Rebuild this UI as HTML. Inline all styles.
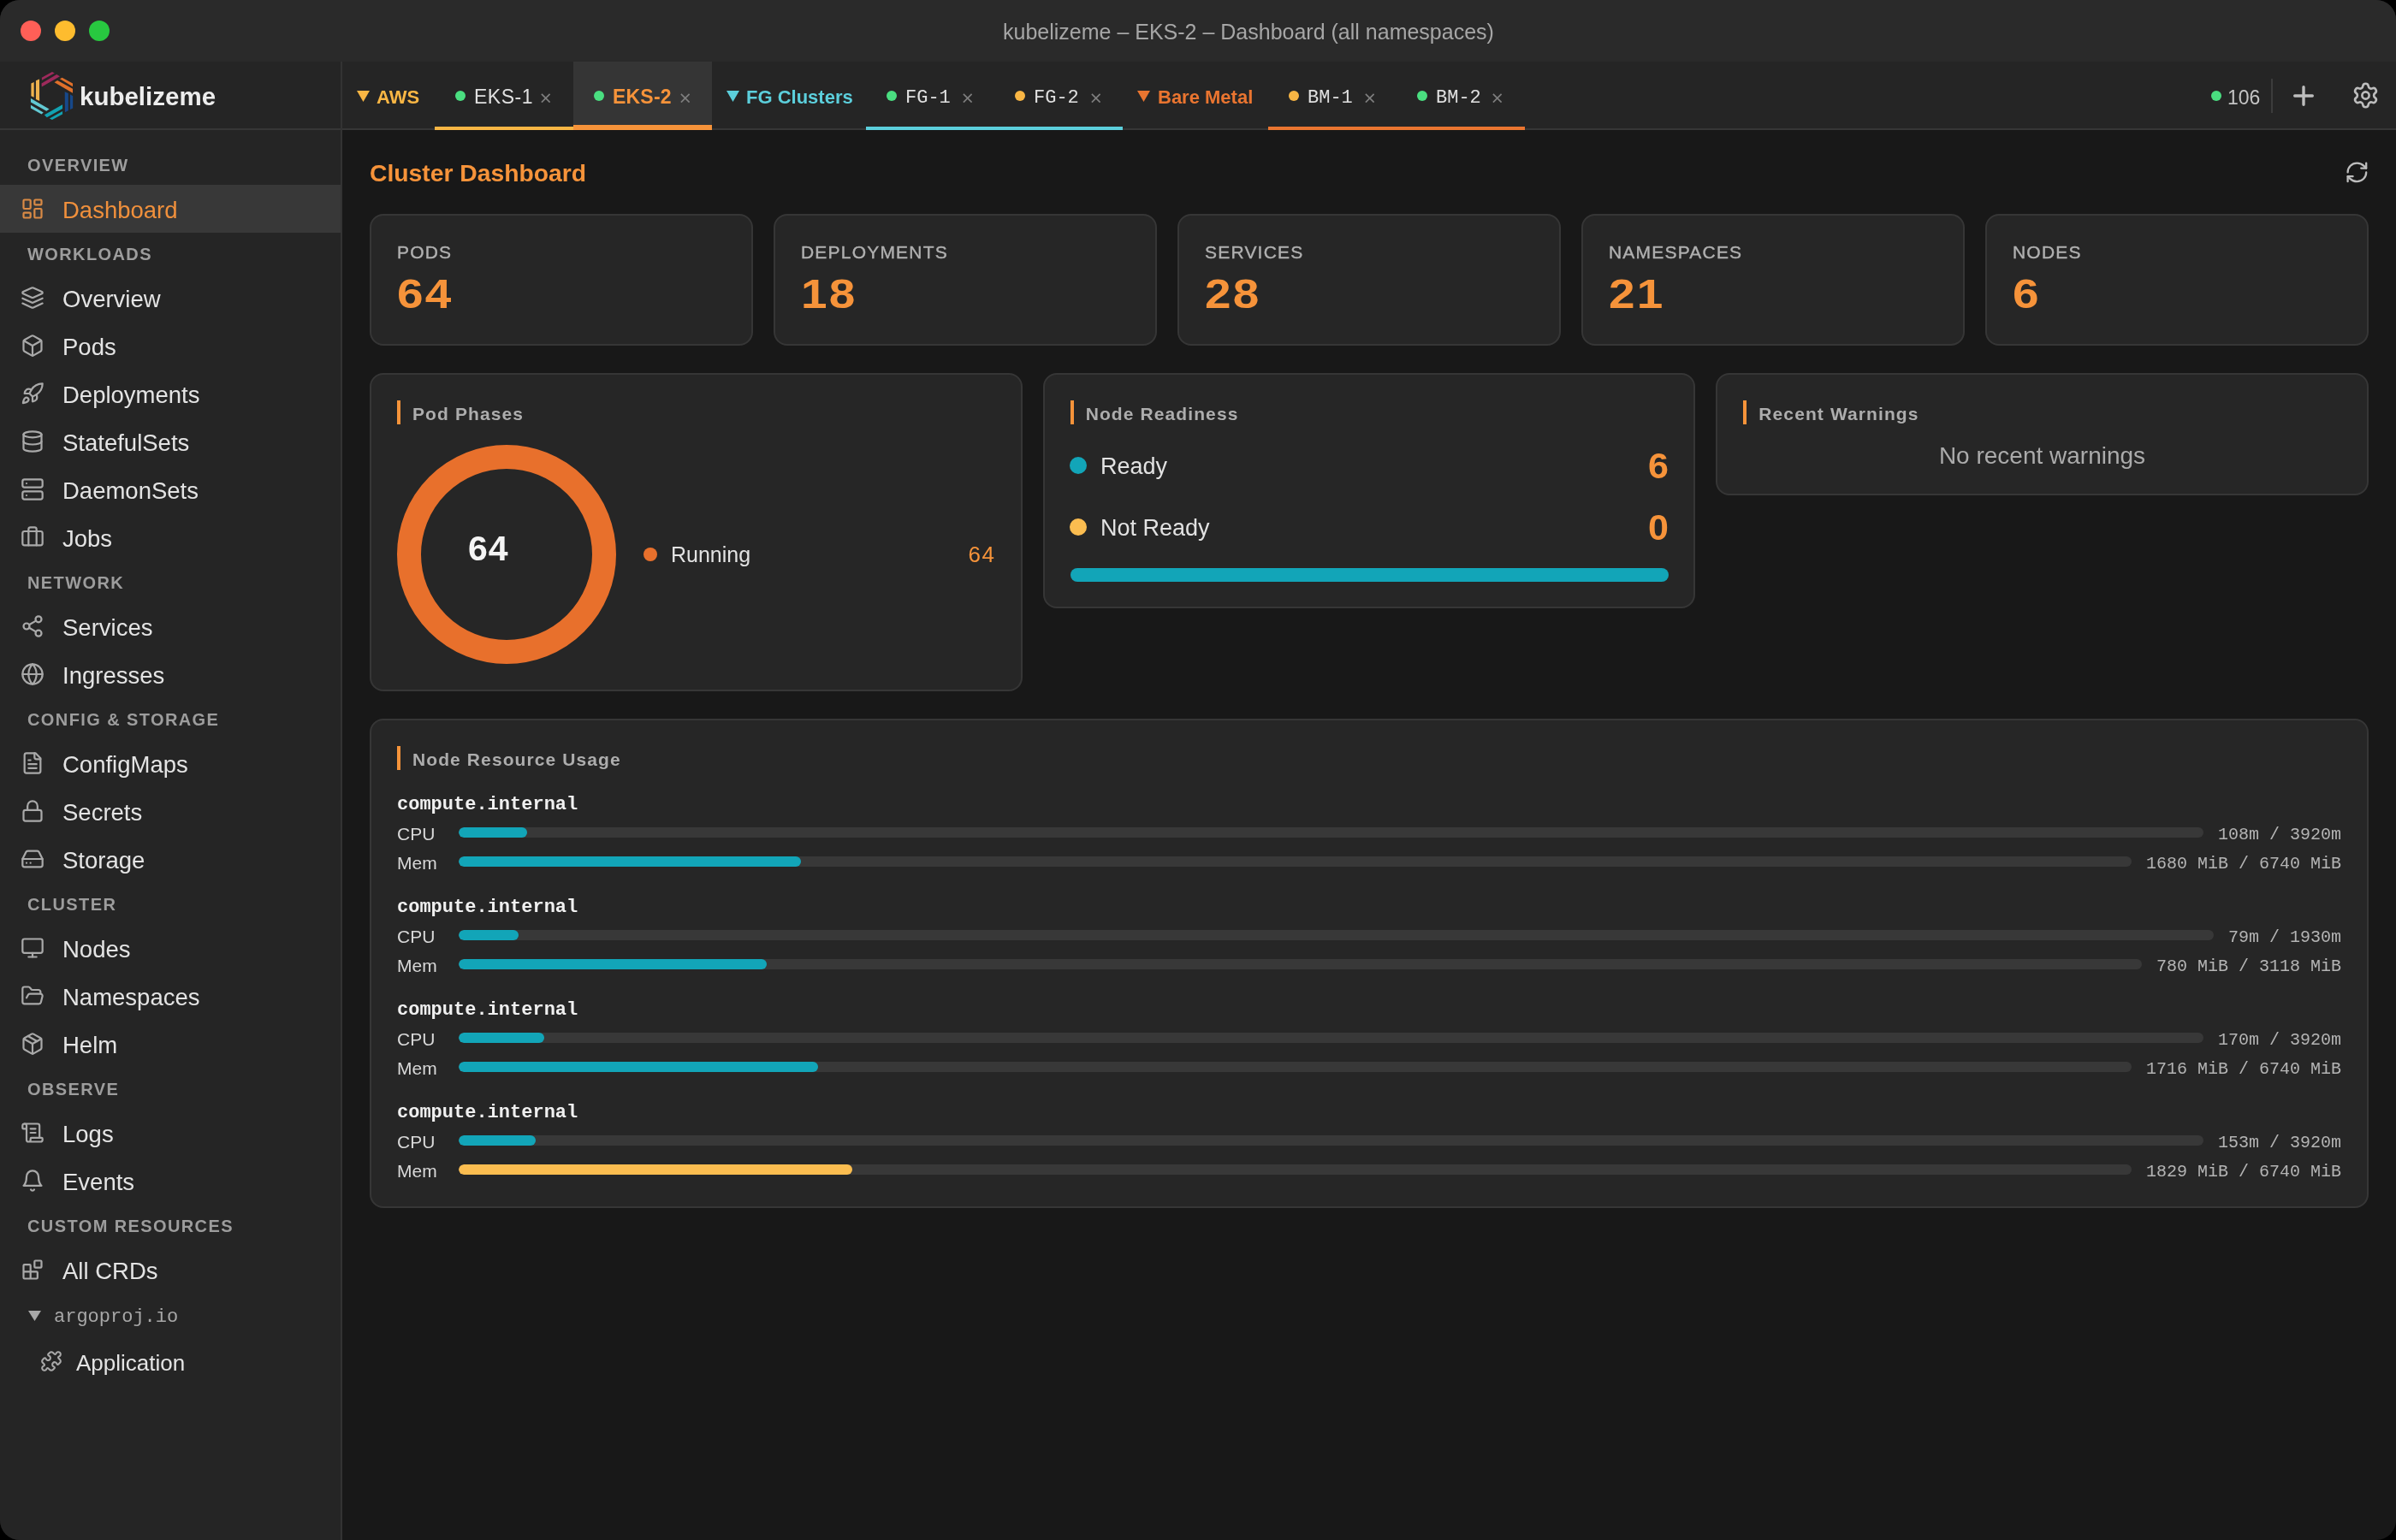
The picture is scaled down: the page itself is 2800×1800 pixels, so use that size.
<!DOCTYPE html>
<html><head><meta charset="utf-8">
<style>
*{box-sizing:border-box;margin:0;padding:0}
html,body{width:2800px;height:1800px;background:#000;overflow:hidden}
body{font-family:"Liberation Sans",sans-serif;color:#e6e6e6}
.win{position:absolute;left:0;top:0;width:2800px;height:1800px;border-radius:23px;overflow:hidden;background:#181818}
.abs{position:absolute}
.lyr{position:absolute;left:0;top:0;width:2800px;height:1800px;will-change:transform}
.titlebar{left:0;top:0;width:2800px;height:72px;background:#2a2a2a}
.tl{position:absolute;top:24px;width:24px;height:24px;border-radius:50%}
.title{position:absolute;left:1172px;top:17px;height:40px;line-height:40px;font-size:25px;color:#a6a6a6;white-space:nowrap}
.header{left:0;top:72px;width:2800px;height:80px;background:#252525;border-bottom:2px solid #363636}
.sidebar{left:0;top:152px;width:400px;height:1648px;background:#252525;border-right:2px solid #333}
.vsep{left:398px;top:72px;width:2px;height:80px;background:#333}
.sl{position:absolute;left:32px;height:48px;line-height:50px;font-size:20px;font-weight:bold;letter-spacing:1.4px;color:#9d9d9d;white-space:nowrap}
.si{position:absolute;left:0;width:398px;height:56px;line-height:56px;font-size:27.5px;color:#e4e4e4;white-space:nowrap}
.si span{position:absolute;left:73px;top:2px}
.si svg{position:absolute;left:24px;top:14px;width:28px;height:28px;fill:none;stroke:#a9a9a9;stroke-width:1.9;stroke-linecap:round;stroke-linejoin:round}
.si.act{background:#383838;color:#f0903c}
.si.act svg{stroke:#d98a45}
.main-title{position:absolute;left:432px;top:180px;height:40px;line-height:40px;font-size:28.3px;font-weight:bold;color:#f6933a;white-space:nowrap}
.card{position:absolute;background:#262626;border:2px solid #363636;border-radius:16px}
.stat .lbl{position:absolute;left:30px;top:28px;height:30px;line-height:30px;font-size:21px;letter-spacing:1.2px;color:#b0b0b0;-webkit-text-stroke:0.4px #b0b0b0;white-space:nowrap}
.stat .val{position:absolute;left:30px;top:63px;height:56px;line-height:56px;font-size:49px;font-weight:bold;letter-spacing:2px;transform:scaleX(1.12);transform-origin:0 0;color:#f6933a}
.ct{position:absolute;left:30px;top:30px;height:32px;}
.ct i{position:absolute;left:0;top:0;width:4px;height:28px;background:#f6933a}
.ct span{position:absolute;left:18px;top:0;height:28px;line-height:31px;font-size:21px;font-weight:bold;letter-spacing:1.1px;color:#adadad;white-space:nowrap}
.mono{font-family:"Liberation Mono",monospace}
.rr{left:464px;width:2272px;height:30px;display:flex;align-items:center}
.rr b{font-weight:normal;width:72px;font-size:21px;color:#d8d8d8;line-height:30px;position:relative;top:1.5px}
.trk{flex:1;height:12px;border-radius:6px;background:#383838;position:relative;overflow:hidden}
.trk div{position:absolute;left:0;top:0;height:12px;border-radius:6px}
.rr s{text-decoration:none;margin-left:17px;font-family:"Liberation Mono",monospace;font-size:20px;color:#b4b4b4;line-height:30px;white-space:nowrap;position:relative;top:2.5px}
.xx{width:13px;height:13px}
.xx:before,.xx:after{content:"";position:absolute;left:-1px;top:5.5px;width:15px;height:2px;background:#8a8a8a;transform:rotate(45deg)}
.xx:after{transform:rotate(-45deg)}
</style></head>
<body>
<div class="win"><div class="lyr">
  <div class="abs titlebar">
    <div class="tl" style="left:24px;background:#ff5f57"></div>
    <div class="tl" style="left:64px;background:#febc2e"></div>
    <div class="tl" style="left:104px;background:#28c840"></div>
    <div class="title">kubelizeme – EKS-2 – Dashboard (all namespaces)</div>
  </div>
  <div class="abs header"></div>
  <div class="abs vsep"></div>
  <div class="abs sidebar"></div>
  <svg class="abs" style="left:30px;top:78px;width:62px;height:68px" viewBox="0 0 1404 1540">
    <polygon fill="#9e2a5c" points="425,288 700,135 765,172 430,358"/>
    <polygon fill="#9e2a5c" points="420,442 820,205 905,257 425,530"/>
    <polygon fill="#e0702a" points="905,325 965,290 1245,440 1245,525"/>
    <polygon fill="#e0702a" points="760,415 840,365 1245,585 1245,695"/>
    <polygon fill="#17488a" points="1035,660 1128,700 1128,1162 1040,1205"/>
    <polygon fill="#17488a" points="1175,732 1250,775 1250,1100 1175,1130"/>
    <polygon fill="#12a2b2" points="495,1275 975,1000 975,1110 560,1340"/>
    <polygon fill="#12a2b2" points="630,1370 975,1175 975,1255 700,1405"/>
    <polygon fill="#62c9d3" points="135,840 625,1120 550,1170 135,942"/>
    <polygon fill="#62c9d3" points="135,1015 470,1210 420,1255 135,1100"/>
    <polygon fill="#eeb24e" points="145,440 220,410 220,810 145,775"/>
    <polygon fill="#eeb24e" points="270,370 362,330 365,905 270,860"/>
  </svg>
  <div class="abs" style="left:93px;top:93px;height:40px;line-height:40px;font-size:29.5px;font-weight:bold;color:#ededed;white-space:nowrap">kubelizeme</div>

  <!-- tabs -->
  <div class="abs" id="tabs" style="left:400px;top:72px;height:80px;width:1400px">
  </div>
  <!-- group labels -->
  <svg class="abs" style="left:417px;top:106px;width:15px;height:13px" viewBox="0 0 15 13"><polygon points="0,0 15,0 7.5,13" fill="#f9b644"/></svg>
  <div class="abs" style="left:440px;top:93.5px;height:40px;line-height:40px;font-size:22px;font-weight:bold;color:#f9b644">AWS</div>

  <div class="abs" style="left:508px;top:148px;width:162px;height:4px;background:#f9b644"></div>
  <div class="abs" style="left:532px;top:106px;width:12px;height:12px;border-radius:50%;background:#4ade80"></div>
  <div class="abs" style="left:554px;top:92.5px;height:40px;line-height:40px;font-size:23px;letter-spacing:0.5px;color:#e0e0e0;white-space:nowrap">EKS-1</div>
  <svg class="abs" style="left:632px;top:108.5px;width:11.5px;height:11.5px" viewBox="0 0 11.5 11.5"><path d="M0.9 0.9l9.7 9.7M10.6 0.9l-9.7 9.7" stroke="#7e7e7e" stroke-width="1.7"/></svg>

  <div class="abs" style="left:670px;top:72px;width:162px;height:80px;background:#353535"></div>
  <div class="abs" style="left:670px;top:146px;width:162px;height:6px;background:#f6933a"></div>
  <div class="abs" style="left:694px;top:106px;width:12px;height:12px;border-radius:50%;background:#4ade80"></div>
  <div class="abs" style="left:716px;top:92.5px;height:40px;line-height:40px;font-size:23px;font-weight:bold;letter-spacing:0.2px;color:#f6933a;white-space:nowrap">EKS-2</div>
  <svg class="abs" style="left:794.5px;top:108.5px;width:11.5px;height:11.5px" viewBox="0 0 11.5 11.5"><path d="M0.9 0.9l9.7 9.7M10.6 0.9l-9.7 9.7" stroke="#7e7e7e" stroke-width="1.7"/></svg>

  <svg class="abs" style="left:849px;top:106px;width:15px;height:13px" viewBox="0 0 15 13"><polygon points="0,0 15,0 7.5,13" fill="#5ccfdc"/></svg>
  <div class="abs" style="left:872px;top:93.5px;height:40px;line-height:40px;font-size:22px;font-weight:bold;color:#5ccfdc;white-space:nowrap">FG Clusters</div>

  <div class="abs" style="left:1012px;top:148px;width:300px;height:4px;background:#5ccfdc"></div>
  <div class="abs" style="left:1036px;top:106px;width:12px;height:12px;border-radius:50%;background:#4ade80"></div>
  <div class="abs mono" style="left:1058px;top:94.5px;height:40px;line-height:40px;font-size:22px;color:#e0e0e0;white-space:nowrap">FG-1</div>
  <svg class="abs" style="left:1124.5px;top:108.5px;width:11.5px;height:11.5px" viewBox="0 0 11.5 11.5"><path d="M0.9 0.9l9.7 9.7M10.6 0.9l-9.7 9.7" stroke="#7e7e7e" stroke-width="1.7"/></svg>
  <div class="abs" style="left:1186px;top:106px;width:12px;height:12px;border-radius:50%;background:#f9b644"></div>
  <div class="abs mono" style="left:1208px;top:94.5px;height:40px;line-height:40px;font-size:22px;color:#e0e0e0;white-space:nowrap">FG-2</div>
  <svg class="abs" style="left:1274.5px;top:108.5px;width:11.5px;height:11.5px" viewBox="0 0 11.5 11.5"><path d="M0.9 0.9l9.7 9.7M10.6 0.9l-9.7 9.7" stroke="#7e7e7e" stroke-width="1.7"/></svg>

  <svg class="abs" style="left:1329px;top:106px;width:15px;height:13px" viewBox="0 0 15 13"><polygon points="0,0 15,0 7.5,13" fill="#ea7530"/></svg>
  <div class="abs" style="left:1353px;top:93.5px;height:40px;line-height:40px;font-size:22px;font-weight:bold;color:#ea7530;white-space:nowrap">Bare Metal</div>

  <div class="abs" style="left:1482px;top:148px;width:300px;height:4px;background:#ea7530"></div>
  <div class="abs" style="left:1506px;top:106px;width:12px;height:12px;border-radius:50%;background:#f9b644"></div>
  <div class="abs mono" style="left:1528px;top:94.5px;height:40px;line-height:40px;font-size:22px;color:#e0e0e0;white-space:nowrap">BM-1</div>
  <svg class="abs" style="left:1594.5px;top:108.5px;width:11.5px;height:11.5px" viewBox="0 0 11.5 11.5"><path d="M0.9 0.9l9.7 9.7M10.6 0.9l-9.7 9.7" stroke="#7e7e7e" stroke-width="1.7"/></svg>
  <div class="abs" style="left:1656px;top:106px;width:12px;height:12px;border-radius:50%;background:#4ade80"></div>
  <div class="abs mono" style="left:1678px;top:94.5px;height:40px;line-height:40px;font-size:22px;color:#e0e0e0;white-space:nowrap">BM-2</div>
  <svg class="abs" style="left:1744px;top:108.5px;width:11.5px;height:11.5px" viewBox="0 0 11.5 11.5"><path d="M0.9 0.9l9.7 9.7M10.6 0.9l-9.7 9.7" stroke="#7e7e7e" stroke-width="1.7"/></svg>

  <!-- right controls -->
  <div class="abs" style="left:2584px;top:106px;width:12px;height:12px;border-radius:50%;background:#4ade80"></div>
  <div class="abs" style="left:2603px;top:94px;height:40px;line-height:40px;font-size:23px;color:#c4c4c4">106</div>
  <div class="abs" style="left:2654px;top:92px;width:2px;height:40px;background:#3c3c3c"></div>
  <svg class="abs" style="left:2678px;top:98px;width:28px;height:28px" viewBox="0 0 28 28"><path d="M14 3.7v20.6M3.7 14h20.6" stroke="#bdbdbd" stroke-width="3.4" stroke-linecap="round"/></svg>
  <svg class="abs" style="left:2747.5px;top:95.3px;width:33px;height:33px" viewBox="0 0 24 24" fill="none" stroke="#bdbdbd" stroke-width="1.9" stroke-linecap="round" stroke-linejoin="round"><path d="M9.671 4.136a2.34 2.34 0 0 1 4.659 0 2.34 2.34 0 0 0 3.319 1.915 2.34 2.34 0 0 1 2.33 4.033 2.34 2.34 0 0 0 0 3.831 2.34 2.34 0 0 1-2.33 4.033 2.34 2.34 0 0 0-3.319 1.915 2.34 2.34 0 0 1-4.659 0 2.34 2.34 0 0 0-3.32-1.915 2.34 2.34 0 0 1-2.33-4.033 2.34 2.34 0 0 0 0-3.831A2.34 2.34 0 0 1 6.35 6.051a2.34 2.34 0 0 0 3.319-1.915"/><circle cx="12" cy="12" r="3"/></svg>

  <!-- SIDEBAR -->
  <div class="sl" style="top:168px">OVERVIEW</div>
  <div class="si act" style="top:216px"><svg viewBox="0 0 24 24"><rect width="7" height="9" x="3" y="3" rx="1"/><rect width="7" height="5" x="14" y="3" rx="1"/><rect width="7" height="9" x="14" y="12" rx="1"/><rect width="7" height="5" x="3" y="16" rx="1"/></svg><span>Dashboard</span></div>
  <div class="sl" style="top:272px">WORKLOADS</div>
  <div class="si" style="top:320px"><svg viewBox="0 0 24 24"><path d="m12.83 2.18a2 2 0 0 0-1.66 0L2.6 6.08a1 1 0 0 0 0 1.83l8.58 3.91a2 2 0 0 0 1.66 0l8.58-3.9a1 1 0 0 0 0-1.83Z"/><path d="m22 17.65-9.17 4.16a2 2 0 0 1-1.66 0L2 17.65"/><path d="m22 12.65-9.17 4.16a2 2 0 0 1-1.66 0L2 12.65"/></svg><span>Overview</span></div>
  <div class="si" style="top:376px"><svg viewBox="0 0 24 24"><path d="M21 8a2 2 0 0 0-1-1.73l-7-4a2 2 0 0 0-2 0l-7 4A2 2 0 0 0 3 8v8a2 2 0 0 0 1 1.73l7 4a2 2 0 0 0 2 0l7-4A2 2 0 0 0 21 16Z"/><path d="m3.3 7 8.7 5 8.7-5"/><path d="M12 22V12"/></svg><span>Pods</span></div>
  <div class="si" style="top:432px"><svg viewBox="0 0 24 24"><path d="M4.5 16.5c-1.5 1.26-2 5-2 5s3.74-.5 5-2c.71-.84.7-2.13-.09-2.91a2.18 2.18 0 0 0-2.91-.09z"/><path d="m12 15-3-3a22 22 0 0 1 2-3.95A12.88 12.88 0 0 1 22 2c0 2.72-.78 7.5-6 11a22.350 22.350 0 0 1-4 2z"/><path d="M9 12H4s.55-3.03 2-4c1.62-1.08 5 0 5 0"/><path d="M12 15v5s3.03-.55 4-2c1.08-1.62 0-5 0-5"/></svg><span>Deployments</span></div>
  <div class="si" style="top:488px"><svg viewBox="0 0 24 24"><ellipse cx="12" cy="5" rx="9" ry="3"/><path d="M3 5V19A9 3 0 0 0 21 19V5"/><path d="M3 12A9 3 0 0 0 21 12"/></svg><span>StatefulSets</span></div>
  <div class="si" style="top:544px"><svg viewBox="0 0 24 24"><rect width="20" height="8" x="2" y="2" rx="2" ry="2"/><rect width="20" height="8" x="2" y="14" rx="2" ry="2"/><line x1="6" x2="6.01" y1="6" y2="6"/><line x1="6" x2="6.01" y1="18" y2="18"/></svg><span>DaemonSets</span></div>
  <div class="si" style="top:600px"><svg viewBox="0 0 24 24"><path d="M16 20V4a2 2 0 0 0-2-2h-4a2 2 0 0 0-2 2v16"/><rect width="20" height="14" x="2" y="6" rx="2"/></svg><span>Jobs</span></div>
  <div class="sl" style="top:656px">NETWORK</div>
  <div class="si" style="top:704px"><svg viewBox="0 0 24 24"><circle cx="18" cy="5" r="3"/><circle cx="6" cy="12" r="3"/><circle cx="18" cy="19" r="3"/><line x1="8.59" x2="15.42" y1="13.51" y2="17.49"/><line x1="15.41" x2="8.59" y1="6.51" y2="10.49"/></svg><span>Services</span></div>
  <div class="si" style="top:760px"><svg viewBox="0 0 24 24"><circle cx="12" cy="12" r="10"/><path d="M12 2a14.5 14.5 0 0 0 0 20 14.5 14.5 0 0 0 0-20"/><path d="M2 12h20"/></svg><span>Ingresses</span></div>
  <div class="sl" style="top:816px">CONFIG &amp; STORAGE</div>
  <div class="si" style="top:864px"><svg viewBox="0 0 24 24"><path d="M15 2H6a2 2 0 0 0-2 2v16a2 2 0 0 0 2 2h12a2 2 0 0 0 2-2V7Z"/><path d="M14 2v4a2 2 0 0 0 2 2h4"/><path d="M10 9H8"/><path d="M16 13H8"/><path d="M16 17H8"/></svg><span>ConfigMaps</span></div>
  <div class="si" style="top:920px"><svg viewBox="0 0 24 24"><rect width="18" height="11" x="3" y="11" rx="2" ry="2"/><path d="M7 11V7a5 5 0 0 1 10 0v4"/></svg><span>Secrets</span></div>
  <div class="si" style="top:976px"><svg viewBox="0 0 24 24"><line x1="22" x2="2" y1="12" y2="12"/><path d="M5.45 5.11 2 12v6a2 2 0 0 0 2 2h16a2 2 0 0 0 2-2v-6l-3.45-6.89A2 2 0 0 0 16.76 4H7.240a2 2 0 0 0-1.79 1.11z"/><line x1="6" x2="6.01" y1="16" y2="16"/><line x1="10" x2="10.01" y1="16" y2="16"/></svg><span>Storage</span></div>
  <div class="sl" style="top:1032px">CLUSTER</div>
  <div class="si" style="top:1080px"><svg viewBox="0 0 24 24"><rect width="20" height="14" x="2" y="3" rx="2"/><line x1="8" x2="16" y1="21" y2="21"/><line x1="12" x2="12" y1="17" y2="21"/></svg><span>Nodes</span></div>
  <div class="si" style="top:1136px"><svg viewBox="0 0 24 24"><path d="m6 14 1.5-2.9A2 2 0 0 1 9.24 10H20a2 2 0 0 1 1.94 2.5l-1.54 6a2 2 0 0 1-1.95 1.5H4a2 2 0 0 1-2-2V5a2 2 0 0 1 2-2h3.9a2 2 0 0 1 1.69.9l.81 1.2a2 2 0 0 0 1.67.9H18a2 2 0 0 1 2 2v2"/></svg><span>Namespaces</span></div>
  <div class="si" style="top:1192px"><svg viewBox="0 0 24 24"><path d="m7.5 4.27 9 5.15"/><path d="M21 8a2 2 0 0 0-1-1.73l-7-4a2 2 0 0 0-2 0l-7 4A2 2 0 0 0 3 8v8a2 2 0 0 0 1 1.73l7 4a2 2 0 0 0 2 0l7-4A2 2 0 0 0 21 16Z"/><path d="m3.3 7 8.7 5 8.7-5"/><path d="M12 22V12"/></svg><span>Helm</span></div>
  <div class="sl" style="top:1248px">OBSERVE</div>
  <div class="si" style="top:1296px"><svg viewBox="0 0 24 24"><path d="M15 12h-5"/><path d="M15 8h-5"/><path d="M19 17V5a2 2 0 0 0-2-2H4"/><path d="M8 21h12a2 2 0 0 0 2-2v-1a1 1 0 0 0-1-1H11a1 1 0 0 0-1 1v1a2 2 0 1 1-4 0V5a2 2 0 1 0-4 0v2a1 1 0 0 0 1 1h3"/></svg><span>Logs</span></div>
  <div class="si" style="top:1352px"><svg viewBox="0 0 24 24"><path d="M6 8a6 6 0 0 1 12 0c0 7 3 9 3 9H3s3-2 3-9"/><path d="M10.3 21a1.94 1.94 0 0 0 3.4 0"/></svg><span>Events</span></div>
  <div class="sl" style="top:1408px">CUSTOM RESOURCES</div>
  <div class="si" style="top:1456px"><svg viewBox="0 0 24 24"><rect width="7" height="7" x="14" y="3" rx="1"/><path d="M10 21V8a1 1 0 0 0-1-1H4a1 1 0 0 0-1 1v12a1 1 0 0 0 1 1h12a1 1 0 0 0 1-1v-5a1 1 0 0 0-1-1H3"/></svg><span>All CRDs</span></div>
  <svg class="abs" style="left:33px;top:1532px;width:15px;height:12px" viewBox="0 0 15 12"><polygon points="0,0 15,0 7.5,12" fill="#a8a8a8"/></svg>
  <div class="abs mono" style="left:63px;top:1520px;height:40px;line-height:40px;font-size:22px;color:#a8a8a8;white-space:nowrap">argoproj.io</div>
  <div class="si" style="top:1563px;height:56px"><svg viewBox="0 0 24 24" style="left:47px;top:15px;width:26px;height:26px"><path d="M19.439 7.85c-.049.322.059.648.289.878l1.568 1.568c.47.47.706 1.087.706 1.704s-.235 1.233-.706 1.704l-1.611 1.611a.98.98 0 0 1-.837.276c-.47-.07-.802-.48-.968-.925a2.501 2.501 0 1 0-3.214 3.214c.446.166.855.497.925.968a.979.979 0 0 1-.276.837l-1.61 1.61a2.404 2.404 0 0 1-1.705.707 2.402 2.402 0 0 1-1.704-.706l-1.568-1.568a1.026 1.026 0 0 0-.877-.29c-.493.074-.84.504-1.02.968a2.5 2.5 0 1 1-3.237-3.237c.464-.18.894-.527.967-1.02a1.026 1.026 0 0 0-.289-.877l-1.568-1.568A2.402 2.402 0 0 1 1.998 12c0-.617.236-1.234.706-1.704L4.23 8.77c.24-.24.581-.353.917-.303.515.077.877.528 1.073 1.01a2.5 2.5 0 1 0 3.259-3.259c-.482-.196-.933-.558-1.01-1.073-.05-.336.062-.676.303-.917l1.525-1.525A2.402 2.402 0 0 1 12 1.998c.617 0 1.234.236 1.704.706l1.568 1.568c.23.23.556.338.877.29.493-.074.84-.504 1.02-.968a2.5 2.5 0 1 1 3.237 3.237c-.464.18-.894.527-.967 1.02Z"/></svg><span style="left:89px;font-size:26px">Application</span></div>
  <!-- /SIDEBAR -->
  <!-- MAIN -->
  <div class="main-title" style="top:181.5px">Cluster Dashboard</div>
  <svg class="abs" style="left:2739.6px;top:186.6px;width:28.8px;height:28.8px" viewBox="0 0 24 24" fill="none" stroke="#bdbdbd" stroke-width="1.9" stroke-linecap="round" stroke-linejoin="round"><path d="M3 12a9 9 0 0 1 9-9 9.75 9.75 0 0 1 6.74 2.74L21 8"/><path d="M21 3v5h-5"/><path d="M21 12a9 9 0 0 1-9 9 9.75 9.75 0 0 1-6.74-2.74L3 16"/><path d="M8 16H3v5"/></svg>
  <div class="card stat" style="left:432px;top:250px;width:448px;height:154px"><div class="lbl">PODS</div><div class="val">64</div></div>
  <div class="card stat" style="left:904px;top:250px;width:448px;height:154px"><div class="lbl">DEPLOYMENTS</div><div class="val">18</div></div>
  <div class="card stat" style="left:1376px;top:250px;width:448px;height:154px"><div class="lbl">SERVICES</div><div class="val">28</div></div>
  <div class="card stat" style="left:1848px;top:250px;width:448px;height:154px"><div class="lbl">NAMESPACES</div><div class="val">21</div></div>
  <div class="card stat" style="left:2320px;top:250px;width:448px;height:154px"><div class="lbl">NODES</div><div class="val">6</div></div>
  <div class="card" style="left:432px;top:436px;width:762.67px;height:372px">
    <div class="ct"><i></i><span>Pod Phases</span></div>
  </div>
  <svg class="abs" style="left:464px;top:520px;width:256px;height:256px" viewBox="0 0 256 256"><circle cx="128" cy="128" r="114" fill="none" stroke="#e8702c" stroke-width="28"/></svg>
  <div class="abs" style="left:547px;top:616.5px;height:48px;line-height:48px;font-size:41px;font-weight:bold;letter-spacing:1px;color:#f4f4f4">64</div>
  <div class="abs" style="left:752px;top:640px;width:16px;height:16px;border-radius:50%;background:#e8702c"></div>
  <div class="abs" style="left:784px;top:630px;height:36px;line-height:36px;font-size:25px;color:#e2e2e2">Running</div>
  <div class="abs" style="left:1060px;top:630px;width:103.5px;text-align:right;height:36px;line-height:36px;font-size:26px;letter-spacing:1.5px;color:#f6933a">64</div>
  <div class="card" style="left:1218.67px;top:436px;width:762.67px;height:275px">
    <div class="ct"><i></i><span>Node Readiness</span></div>
  </div>
  <div class="abs" style="left:1250.4px;top:534.3px;width:20px;height:20px;border-radius:50%;background:#12a5b8"></div>
  <div class="abs" style="left:1286px;top:526px;height:38px;line-height:38px;font-size:27px;color:#e2e2e2">Ready</div>
  <div class="abs" style="left:1850px;top:520px;width:100px;text-align:right;height:48px;line-height:48px;font-size:43px;font-weight:bold;color:#f6933a">6</div>
  <div class="abs" style="left:1250.4px;top:606px;width:20px;height:20px;border-radius:50%;background:#fbbd50"></div>
  <div class="abs" style="left:1286px;top:598px;height:38px;line-height:38px;font-size:27px;color:#e2e2e2">Not Ready</div>
  <div class="abs" style="left:1850px;top:592px;width:100px;text-align:right;height:48px;line-height:48px;font-size:43px;font-weight:bold;color:#f6933a">0</div>
  <div class="abs" style="left:1250.6px;top:664px;width:699px;height:16px;border-radius:8px;background:#12a5b8"></div>
  <div class="card" style="left:2005.33px;top:436px;width:762.67px;height:143px">
    <div class="ct"><i></i><span>Recent Warnings</span></div>
  </div>
  <div class="abs" style="left:2005px;top:513.5px;width:763px;text-align:center;height:38px;line-height:38px;font-size:28px;color:#ababab">No recent warnings</div>
  <div class="card" style="left:432px;top:840px;width:2336px;height:572px">
    <div class="ct"><i></i><span>Node Resource Usage</span></div>
  </div>
  <div class="abs mono" style="left:464px;top:927px;height:28px;line-height:28px;font-size:22px;font-weight:bold;color:#f0f0f0">compute.internal</div>
  <div class="abs rr" style="top:958px"><b>CPU</b><div class="trk"><div style="width:80px;background:#12a5b8"></div></div><s>108m / 3920m</s></div>
  <div class="abs rr" style="top:992px"><b>Mem</b><div class="trk"><div style="width:400px;background:#12a5b8"></div></div><s>1680 MiB / 6740 MiB</s></div>
  <div class="abs mono" style="left:464px;top:1047px;height:28px;line-height:28px;font-size:22px;font-weight:bold;color:#f0f0f0">compute.internal</div>
  <div class="abs rr" style="top:1078px"><b>CPU</b><div class="trk"><div style="width:70px;background:#12a5b8"></div></div><s>79m / 1930m</s></div>
  <div class="abs rr" style="top:1112px"><b>Mem</b><div class="trk"><div style="width:360px;background:#12a5b8"></div></div><s>780 MiB / 3118 MiB</s></div>
  <div class="abs mono" style="left:464px;top:1167px;height:28px;line-height:28px;font-size:22px;font-weight:bold;color:#f0f0f0">compute.internal</div>
  <div class="abs rr" style="top:1198px"><b>CPU</b><div class="trk"><div style="width:100px;background:#12a5b8"></div></div><s>170m / 3920m</s></div>
  <div class="abs rr" style="top:1232px"><b>Mem</b><div class="trk"><div style="width:420px;background:#12a5b8"></div></div><s>1716 MiB / 6740 MiB</s></div>
  <div class="abs mono" style="left:464px;top:1287px;height:28px;line-height:28px;font-size:22px;font-weight:bold;color:#f0f0f0">compute.internal</div>
  <div class="abs rr" style="top:1318px"><b>CPU</b><div class="trk"><div style="width:90px;background:#12a5b8"></div></div><s>153m / 3920m</s></div>
  <div class="abs rr" style="top:1352px"><b>Mem</b><div class="trk"><div style="width:460px;background:#fbbd50"></div></div><s>1829 MiB / 6740 MiB</s></div>
  <!-- /MAIN -->
</div></div>
</body></html>
